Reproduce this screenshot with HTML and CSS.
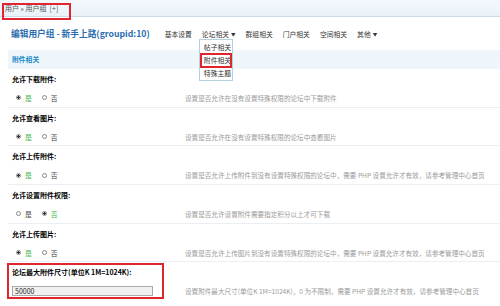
FILE: index.html
```html
<!DOCTYPE html>
<html lang="zh-CN">
<head>
<meta charset="utf-8">
<title>编辑用户组</title>
<link rel="stylesheet" href="styles.css">
</head>
<body>
<div class="page">
  <div class="crumb">用户 » 用户组 &nbsp;[+]</div>
  <div class="crumb-mark"></div>

  <div class="head">
    <h1 class="title">编辑用户组 - 新手上路(groupid:10)</h1>
    <ul class="nav">
      <li class="nav-item">基本设置</li>
      <li class="nav-item has-menu">论坛相关<span class="caret">▼</span>
        <ul class="menu">
          <li class="menu-item">帖子相关</li>
          <li class="menu-item active">附件相关</li>
          <li class="menu-item">特殊主题</li>
        </ul>
      </li>
      <li class="nav-item">群组相关</li>
      <li class="nav-item">门户相关</li>
      <li class="nav-item">空间相关</li>
      <li class="nav-item">其他<span class="caret">▼</span></li>
    </ul>
  </div>

  <div class="panel">
    <div class="partition">附件相关</div>

    <div class="setting">
      <div class="label">允许下载附件:</div>
      <div class="value">
        <div class="radios">
          <label class="opt on"><input type="radio" name="r1" checked>是</label>
          <label class="opt"><input type="radio" name="r1">否</label>
        </div>
        <div class="desc">设置是否允许在没有设置特殊权限的论坛中下载附件</div>
      </div>
    </div>

    <div class="setting">
      <div class="label">允许查看图片:</div>
      <div class="value">
        <div class="radios">
          <label class="opt on"><input type="radio" name="r2" checked>是</label>
          <label class="opt"><input type="radio" name="r2">否</label>
        </div>
        <div class="desc">设置是否允许在没有设置特殊权限的论坛中查看图片</div>
      </div>
    </div>

    <div class="setting">
      <div class="label">允许上传附件:</div>
      <div class="value">
        <div class="radios">
          <label class="opt on"><input type="radio" name="r3" checked>是</label>
          <label class="opt"><input type="radio" name="r3">否</label>
        </div>
        <div class="desc">设置是否允许上传附件到没有设置特殊权限的论坛中，需要 PHP 设置允许才有效，请参考管理中心首页</div>
      </div>
    </div>

    <div class="setting">
      <div class="label">允许设置附件权限:</div>
      <div class="value">
        <div class="radios">
          <label class="opt"><input type="radio" name="r4">是</label>
          <label class="opt on"><input type="radio" name="r4" checked>否</label>
        </div>
        <div class="desc">设置是否允许设置附件需要指定积分以上才可下载</div>
      </div>
    </div>

    <div class="setting">
      <div class="label">允许上传图片:</div>
      <div class="value">
        <div class="radios">
          <label class="opt on"><input type="radio" name="r5" checked>是</label>
          <label class="opt"><input type="radio" name="r5">否</label>
        </div>
        <div class="desc">设置是否允许上传图片到没有设置特殊权限的论坛中，需要 PHP 设置允许才有效，请参考管理中心首页</div>
      </div>
    </div>

    <div class="setting last">
      <div class="label">论坛最大附件尺寸(单位K 1M=1024K):</div>
      <div class="value">
        <div class="radios"><input class="txt" type="text" value="50000"></div>
        <div class="desc">设置附件最大尺寸(单位K 1M=1024K)，0 为不限制，需要 PHP 设置允许才有效，请参考管理中心首页</div>
      </div>
      <div class="field-mark"></div>
    </div>
  </div>
</div>
</body>
</html>
```

FILE: styles.css
```css
* { box-sizing: border-box; }
html, body { margin: 0; padding: 0; }
body {
  width: 500px;
  height: 306px;
  overflow: hidden;
  background: #fff;
  font-family: "Noto Sans CJK SC", "Noto Sans", sans-serif;
  color: #000;
}
.page { position: relative; width: 500px; height: 306px; }
ul { list-style: none; margin: 0; padding: 0; }

.crumb {
  height: 17px;
  line-height: 16px;
  padding-left: 5px;
  font-size: 7px;
  color: #555;
  background: linear-gradient(#F3F8FC, #EAF2F9);
  border-bottom: 1px solid #C9DCEA;
}
.crumb-mark {
  position: absolute;
  left: 2px;
  top: 3px;
  width: 69px;
  height: 17px;
  border: 2px solid #E0252C;
}

.head {
  display: flex;
  align-items: center;
  height: 33px;
  padding-left: 11px;
}
.title {
  margin: 0;
  font-size: 8.7px;
  font-weight: bold;
  color: #2A6DAE;
  white-space: nowrap;
}
.nav {
  display: flex;
  margin-left: 10px;
}
.nav-item {
  position: relative;
  padding: 0 5px;
  font-size: 6.8px;
  line-height: 10px;
  color: #333;
  white-space: nowrap;
}
.caret { font-size: 4.5px; margin-left: 2px; vertical-align: 1px; }
.menu {
  position: absolute;
  left: 2px;
  top: 10px;
  width: 34px;
  padding: 1px 0 0;
  background: #fff;
  border: 1px solid #B7D0DE;
  z-index: 2;
}
.menu-item {
  height: 13px;
  line-height: 13px;
  padding-left: 4px;
  font-size: 6.8px;
  color: #333;
}
.menu-item.active {
  outline: 2px solid #E0252C;
  outline-offset: -1px;
  margin: 0 1px;
  padding-left: 3px;
}

.panel { margin-left: 8px; }
.partition {
  height: 19px;
  line-height: 19px;
  padding-left: 4px;
  background: #EEF6FC;
  color: #1C8BC6;
  font-size: 6.8px;
  font-weight: bold;
}
.setting {
  position: relative;
  border-bottom: 1px solid #E9F0F5;
}
.label {
  height: 20px;
  line-height: 21px;
  padding-left: 4px;
  font-size: 7px;
  font-weight: bold;
}
.value {
  display: flex;
  align-items: center;
  height: 17.7px;
}
.radios {
  display: flex;
  align-items: center;
  width: 177px;
  padding-left: 8px;
}
.opt {
  display: flex;
  align-items: center;
  font-size: 6.8px;
  color: #444;
  margin-right: 10px;
}
.opt.on { color: #3DB83D; }
.opt input {
  appearance: none;
  -webkit-appearance: none;
  width: 5px;
  height: 5px;
  margin: 0 4px 0 0;
  border: 1px solid #8A8A8A;
  border-radius: 50%;
  background: #fff;
}
.opt input:checked {
  background: radial-gradient(circle, #333 0 1.1px, #fff 1.3px);
}
.desc {
  font-size: 6.6px;
  color: #9A9A9A;
  white-space: nowrap;
}
.setting.last { border-bottom: none; }
.setting.last .value { height: 18px; }
.setting.last .radios { padding-left: 4px; }
.txt {
  width: 141px;
  height: 10px;
  padding: 0 2px;
  border: 1px solid #A9A9A9;
  background: #F1F1F1;
  font-family: "Noto Sans CJK SC", sans-serif;
  font-size: 7px;
  line-height: 8px;
  color: #222;
}
.field-mark {
  position: absolute;
  left: -1px;
  top: 1px;
  width: 157px;
  height: 36px;
  border: 2px solid #E0252C;
}
```
